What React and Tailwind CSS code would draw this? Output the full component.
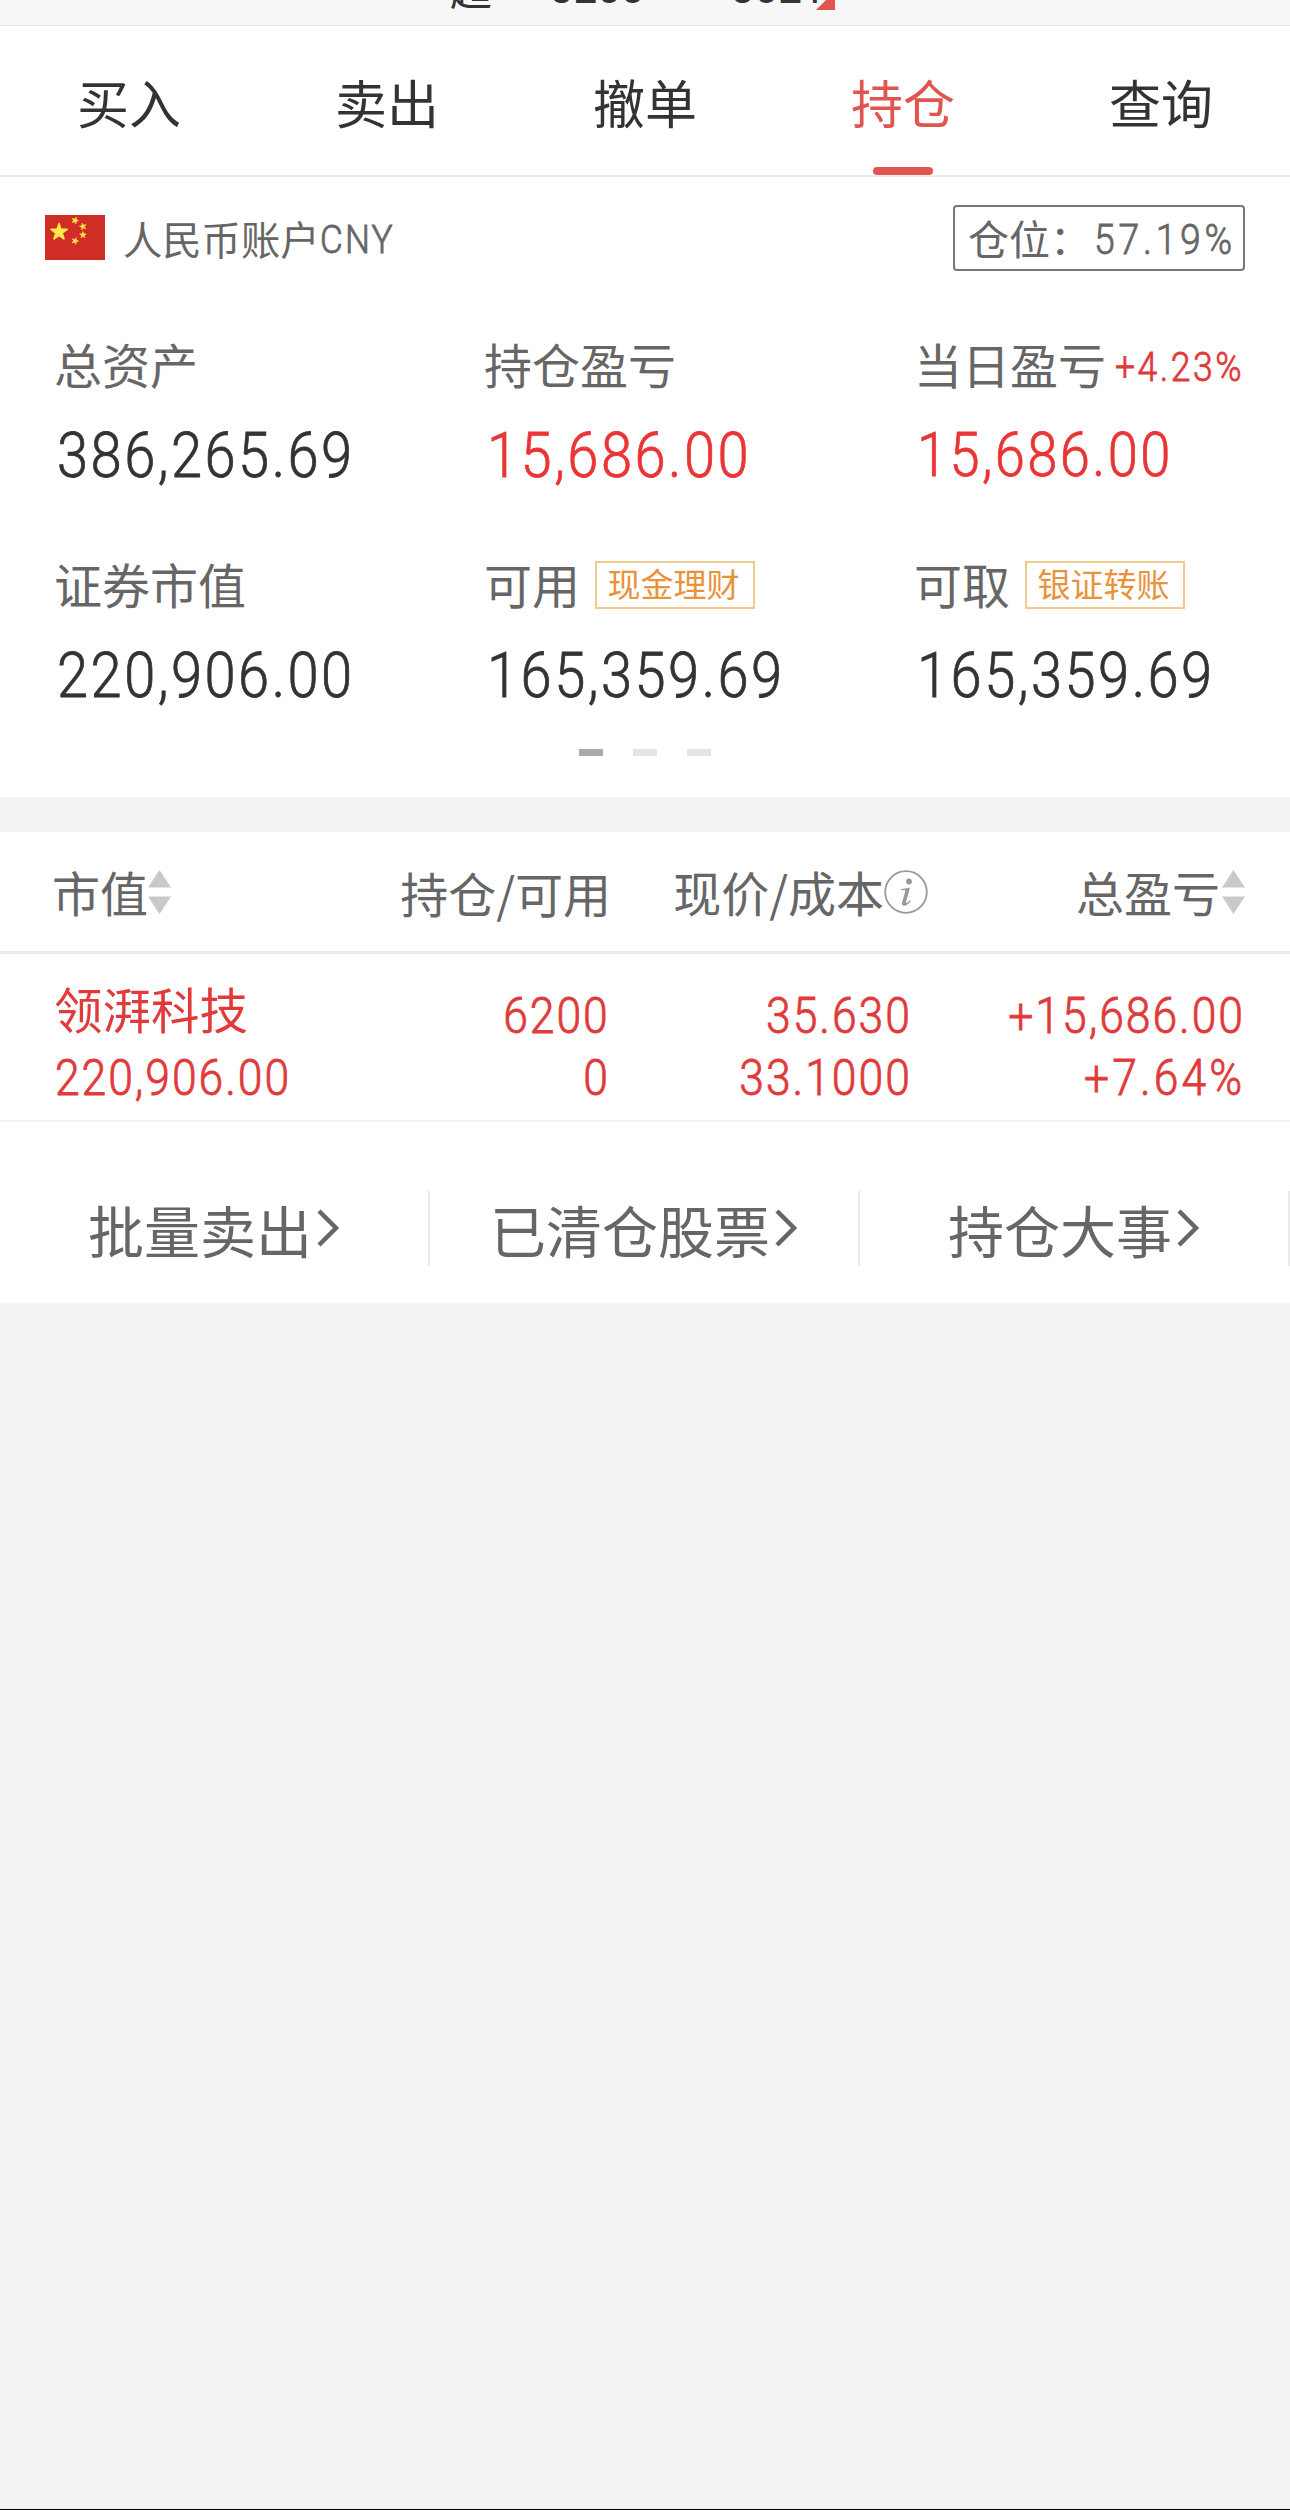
import React from "react";

const cjk = "font-['Noto_Sans_CJK_SC',sans-serif]";

function Num({ children, className = "", right = false, spacing = "tracking-[0.044em]" }) {
  return (
    <span
      className={`inline-block whitespace-nowrap font-['Roboto',sans-serif] font-light [-webkit-text-stroke:0.8px] ${
        right ? "origin-right" : "origin-left"
      } scale-x-[0.89] ${spacing} ${className}`}
    >
      {children}
    </span>
  );
}

function Sort() {
  return (
    <svg width="23" height="44" viewBox="0 0 23 44" className="shrink-0" fill="#c9c9c9">
      <path d="M11.5 0 23 17.500H0zM0 26.500h23L11.500 44z" />
    </svg>
  );
}

function Info() {
  return (
    <svg width="44" height="44" viewBox="0 0 44 44" className="shrink-0">
      <circle cx="22" cy="22" r="20.800" fill="none" stroke="#999" strokeWidth="1.800" />
      <circle cx="25" cy="11.500" r="2.900" fill="#999" />
      <path d="M17 19.200 26 17.500 22 32q-.3 1.500 1 .8 1.500-1 2.800-2.600l1 .8q-3.500 4.800-6.500 4.800-3 0-2.200-3.200l3.200-11.300q.3-1.200-1-1.200l-3.300.3z" fill="#999" />
    </svg>
  );
}

const star = "0,-1 .225,-.309 .951,-.309 .363,.118 .588,.809 0,.382 -.588,.809 -.363,.118 -.951,-.309 -.225,-.309";

function Flag() {
  return (
    <svg width="60" height="45" viewBox="0 0 60 45" className="shrink-0">
      <rect width="60" height="45" fill="#d02d26" />
      <g fill="#ffe94a" stroke="#ffe94a" strokeWidth=".2" strokeLinejoin="round">
        <polygon points={star} transform="translate(14 17) scale(8.400)" />
        <polygon points={star} transform="translate(30 5.500) rotate(20) scale(3.400)" />
        <polygon points={star} transform="translate(38 11.500) rotate(-15) scale(3.400)" />
        <polygon points={star} transform="translate(38 20) scale(3.400)" />
        <polygon points={star} transform="translate(30 26) rotate(20) scale(3.400)" />
      </g>
    </svg>
  );
}

function Stat({ label, extra, value, valueClass }) {
  return (
    <div className="h-[220px] pl-[54px]">
      <div className="flex h-[74px] items-center whitespace-nowrap text-[48px] leading-none text-[#666]">
        <span className="-translate-y-[4px]">{label}</span>
        {extra}
      </div>
      <div className="flex h-[102px] items-center pl-[3px]">
        <Num className={valueClass}>{value}</Num>
      </div>
    </div>
  );
}

function Tag({ children }) {
  return (
    <span className="ml-[15px] flex h-[48px] w-[160px] -translate-y-[2px] items-center justify-center border-2 border-[#efcb8c] pr-[3px] pb-[3px] text-[33px] leading-none text-[#e8933a]">
      {children}
    </span>
  );
}

const tabs = ["买入", "卖出", "撤单", "持仓", "查询"];
const links = ["批量卖出", "已清仓股票", "持仓大事"];
const dark = "text-[63px] leading-none text-[#333]";
const red = "text-[63px] leading-none text-[#ea3535]";
const redSmall = "text-[61px] leading-none text-[#ea3535]";

export default function App() {
  return (
    <div className={`flex h-[2510px] w-[1290px] flex-col overflow-hidden bg-[#f2f3f5] ${cjk}`}>
      <div className="relative h-[26px] shrink-0 overflow-hidden border-b border-[#e8e8e8] bg-[#f7f7f7] text-[#333]">
        <span className="absolute left-[450px] top-[-34px] text-[42px] leading-none">超</span>
        <span className="absolute left-[550px] top-[-32px] font-['Roboto',sans-serif] text-[42px] leading-none">3200</span>
        <span className="absolute left-[731px] top-[-32px] font-['Roboto',sans-serif] text-[42px] leading-none">3021</span>
        <svg className="absolute left-[816px] top-[-9px]" width="19" height="19"><path d="M19 0v19H0z" fill="#e0554f" /></svg>
      </div>

      <nav className="grid h-[151px] shrink-0 grid-cols-5 border-b-2 border-[#ebebeb] bg-white text-[52px] leading-none text-[#333]">
        {tabs.map((t) => (
          <div key={t} className="relative flex items-center justify-center pt-[2px]">
            <span className={t === "持仓" ? "text-[#e0554f]" : ""}>{t}</span>
            {t === "持仓" && <i className="absolute bottom-0 h-[8px] w-[60px] rounded-[4px] bg-[#e0554f]" />}
          </div>
        ))}
      </nav>

      <section className="h-[620px] shrink-0 bg-white">
        <div className="flex h-[121px] items-center justify-between pl-[45px] pr-[45px]">
          <div className="flex items-center text-[39.300px] leading-none text-[#666]">
            <Flag />
            <span className="ml-[18px]">人民币账户</span>
            <Num className="ml-px translate-y-[2px] text-[39.500px]" spacing="tracking-[0.06em]">CNY</Num>
          </div>
          <div className="flex h-[66px] w-[292px] items-center whitespace-nowrap rounded-[4px] border-2 border-[#777] pl-[13px] text-[41px] leading-none text-[#666]">
            <span>仓位：</span>
            <Num className="ml-[3px] translate-y-[2px] text-[42px]" spacing="tracking-[0.1em]">57.19%</Num>
          </div>
        </div>
        <div className="grid grid-cols-3 pt-[32px]">
          <Stat label="总资产" value="386,265.69" valueClass={dark} />
          <Stat label="持仓盈亏" value="15,686.00" valueClass={red} />
          <Stat
            label="当日盈亏"
            value="15,686.00"
            valueClass={redSmall}
            extra={<Num className="ml-[9px] translate-y-px text-[40px] text-[#e03a3a]" spacing="tracking-[0.07em]">+4.23%</Num>}
          />
          <Stat label="证券市值" value="220,906.00" valueClass={dark} />
          <Stat label="可用" value="165,359.69" valueClass={dark} extra={<Tag>现金理财</Tag>} />
          <Stat label="可取" value="165,359.69" valueClass={dark} extra={<Tag>银证转账</Tag>} />
        </div>
        <div className="-mt-[21px] flex justify-center gap-[30px]">
          <i className="h-[7px] w-[24px] bg-[#aaa]" />
          <i className="h-[7px] w-[24px] bg-[#e4e4e4]" />
          <i className="h-[7px] w-[24px] bg-[#e4e4e4]" />
        </div>
      </section>

      <section className="mt-[35px] shrink-0 bg-white">
        <div className="grid h-[122px] grid-cols-[300px_311px_317px_317px] items-center border-b-[3px] border-[#ebebed] pr-[45px] text-[48px] leading-none text-[#666]">
          <div className="flex items-center pl-[52px]"><span className="-translate-y-px">市值</span><Sort /></div>
          <div className="text-right">持仓/可用</div>
          <div className="flex items-center justify-end"><span className="-translate-y-px">现价/成本</span><Info /></div>
          <div className="flex items-center justify-end"><span className="mr-[2px] -translate-y-px">总盈亏</span><Sort /></div>
        </div>
        <div className="grid h-[168px] grid-cols-[300px_310px_302px_333px] border-b-2 border-[#f3f3f3] pt-[31px] text-[50px] leading-[62px] text-[#e03a3a]">
          <div className="flex flex-col items-start pl-[54px]">
            <span className="-translate-y-[8px] text-[48.500px]">领湃科技</span>
            <Num className="pl-px">220,906.00</Num>
          </div>
          <div className="flex flex-col items-end"><Num right>6200</Num><Num right>0</Num></div>
          <div className="flex flex-col items-end"><Num right>35.630</Num><Num right>33.1000</Num></div>
          <div className="flex flex-col items-end"><Num right>+15,686.00</Num><Num right spacing="tracking-[0.07em]">+7.64%</Num></div>
        </div>
        <div className="grid h-[181px] grid-cols-3 items-center pt-[31px] text-[56px] leading-none text-[#666]">
          {links.map((t) => (
            <div key={t} className="flex h-[75px] items-center justify-center border-r-2 border-[#ebebeb]">
              <span className="translate-y-px">{t}</span>
              <svg width="28" height="40" viewBox="0 0 28 40" fill="none" stroke="#666" strokeWidth="4.500"><path d="M7 3 24 20 7 37" /></svg>
            </div>
          ))}
        </div>
      </section>
      <div className="mt-auto h-px bg-black" />
    </div>
  );
}
